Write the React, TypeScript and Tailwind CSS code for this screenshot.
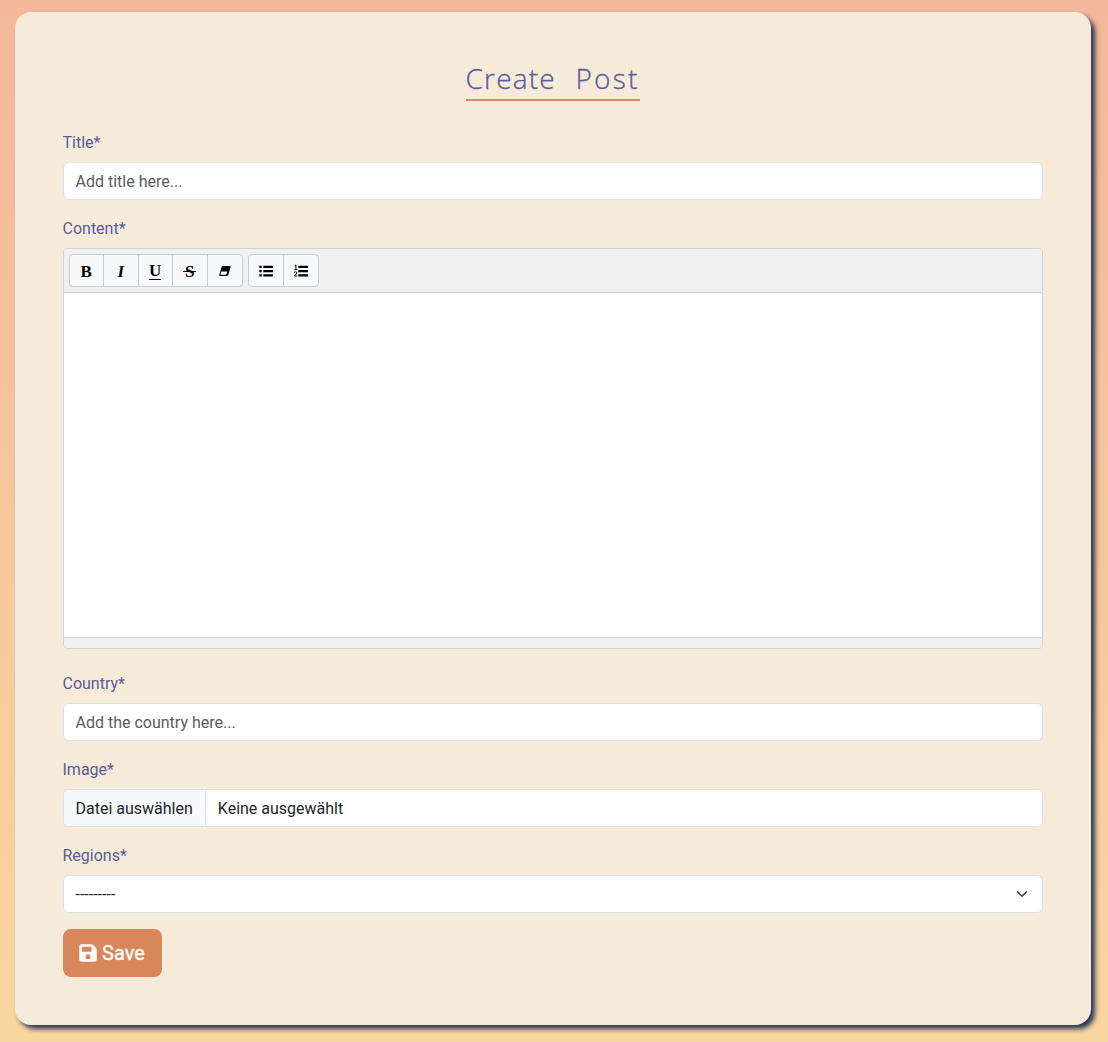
import React from 'react';
import { FaFloppyDisk } from 'react-icons/fa6';

const control = 'h-[38px] w-full rounded-md border border-[#dee2e6] bg-white';
const labelStyle = 'mb-[7px] pt-px leading-6 text-[#5a5c9b]';

function Field({ label, children }: { label: string; children: React.ReactNode }) {
  return (
    <div className="mb-4">
      <div className={labelStyle}>{label}</div>
      {children}
    </div>
  );
}

function Eraser() {
  return (
    <svg width="14" height="14" viewBox="0 0 14 14">
      <path d="M5 2h6.800q1.100 0 .8 1l-2.200 7.800q-.3 1.200-1.400 1.200H2.200q-1.200 0-.9-1.200L3.500 3.200Q3.900 2 5 2z" fill="#000" />
      <path d="M3.300 7.400h6.100l-.8 2.700q-.2.700-.8.700H3.100q-.8 0-.6-.8z" fill="#fff" />
    </svg>
  );
}

function ListIcon({ ordered }: { ordered?: boolean }) {
  return (
    <svg width="14" height="14" viewBox="0 0 14 14" className="overflow-visible">
      {ordered ? (
        <g fill="none" stroke="#000" strokeWidth="1">
          <path d="M.6 2 1.900 1v4.500M.3 5.500h3" />
          <path d="M.2 8.700q.2-.9 1.300-.9 1.500 0 1.300 1.200Q2.600 9.900.3 12h3" />
        </g>
      ) : (
        <path d="M.3 1.800h2.400V4H.3zM.3 6h2.400v2.200H.3zM.3 10.200h2.400v2.200H.3z" fill="#000" />
      )}
      <path d="M4.300 1.800h9.700V4H4.300zM4.300 6h9.700v2.200H4.300zM4.300 10.200h9.700v2.200H4.300z" fill="#000" />
    </svg>
  );
}

function ToolGroup({ items }: { items: React.ReactNode[] }) {
  return (
    <div className="flex h-[33px] divide-x divide-[#c6c9cc] overflow-hidden rounded-[4px] border border-[#c9cccf] bg-[#f8f9fa]">
      {items.map((item, i) => (
        <button key={i} className="flex w-[34.5px] items-center justify-center pt-px">
          {item}
        </button>
      ))}
    </div>
  );
}

const letter = 'font-["Liberation_Serif",serif] text-[17px] font-bold leading-none text-black';

export default function App() {
  return (
    <div className="h-[1042px] bg-linear-to-b from-[#f4b79a] to-[#f8d69f] pt-3 pl-[14.5px] font-[Roboto,sans-serif] text-base text-[#212529]">
      <main className="h-[1013px] w-[1076px] rounded-2xl bg-[#f6ebd9] px-12 pt-12 shadow-[4px_4px_5px_0px_#293558]">
        <div className="mb-[29px] flex justify-center">
          <h1 className="flex h-[41px] w-[174px] justify-between border-b-2 border-[#d98a61] font-['Open_Sans',sans-serif] text-[28px] leading-[36px] font-light whitespace-nowrap text-[#5a5c9b] [-webkit-text-stroke:0.3px_#5a5c9b]">
            <span className="tracking-[1.2px]">Create </span>
            <span className="tracking-[2.2px]">Post</span>
          </h1>
        </div>
        <Field label="Title*">
          <input className={`${control} px-3 placeholder:text-[#595c5f]`} placeholder="Add title here..." />
        </Field>
        <div className="mb-[22px]">
          <div className={labelStyle}>Content*</div>
          <div className="flex h-[401px] flex-col overflow-hidden rounded-[4px] border border-[#d0d3d5] bg-white">
            <div className="flex h-[44px] shrink-0 gap-[5px] border-b border-[#d3d4d6] bg-[#f0f0f0] px-[5px] pt-[5px]">
              <ToolGroup
                items={[
                  <span className={letter}>B</span>,
                  <span className={`${letter} italic`}>I</span>,
                  <span className={`${letter} border-b border-black text-[15px] leading-[12px]`}>U</span>,
                  <span className={`${letter} relative`}>
                    S<span className="absolute top-[8px] -left-[2px] h-[1.5px] w-[13px] bg-black" />
                  </span>,
                  <Eraser />,
                ]}
              />
              <ToolGroup items={[<ListIcon />, <ListIcon ordered />]} />
            </div>
            <div className="grow" />
            <div className="h-[11px] shrink-0 border-t border-[#d3d4d6] bg-[#f0f0f0]" />
          </div>
        </div>
        <Field label="Country*">
          <input className={`${control} px-3 placeholder:text-[#595c5f]`} placeholder="Add the country here..." />
        </Field>
        <Field label="Image*">
          <div className={`${control} flex overflow-hidden leading-[38px]`}>
            <span className="border-r border-[#dee2e6] bg-[#f8f9fa] px-3">Datei auswählen</span>
            <span className="px-3">Keine ausgewählt</span>
          </div>
        </Field>
        <Field label="Regions*">
          <div className={`${control} flex items-center justify-between pr-3 pl-3`}>
            <span className="pt-0.5">---------</span>
            <svg width="16" height="12" viewBox="0 0 16 16" className="h-3 w-4">
              <path d="m2 5 6 6 6-6" fill="none" stroke="#343a40" strokeWidth="2" strokeLinecap="round" strokeLinejoin="round" />
            </svg>
          </div>
        </Field>
        <button className="flex h-12 w-[99px] items-center justify-center gap-1 rounded-lg bg-[#d8865b] pr-px text-xl text-white [-webkit-text-stroke:0.3px_white]">
          <FaFloppyDisk size={20} strokeWidth={0} />
          Save
        </button>
      </main>
    </div>
  );
}
